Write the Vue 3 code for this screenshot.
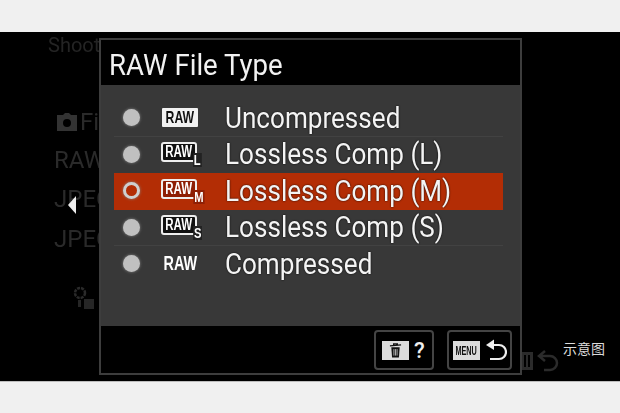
<script setup>
const fileTypes = [
  { label: 'Uncompressed', badge: 'solid', suffix: '' },
  { label: 'Lossless Comp (L)', badge: 'outline', suffix: 'L' },
  { label: 'Lossless Comp (M)', badge: 'outline', suffix: 'M', selected: true },
  { label: 'Lossless Comp (S)', badge: 'outline', suffix: 'S' },
  { label: 'Compressed', badge: 'plain', suffix: '' }
]
</script>

<template>
  <main class="page">
    <div class="top-band"></div>
    <section class="screen">
      <div class="back-menu">
        <div class="back-tab">Shoot</div>
        <div class="back-row back-row--first">
          <svg class="back-camera" viewBox="0 0 20 18">
            <path d="M6 2 L8 0 H12 L14 2 H20 V18 H0 V2 Z" fill="#333" />
            <circle cx="10" cy="10" r="4" fill="#000" />
          </svg>
          Fi
        </div>
        <div class="back-row">RAW</div>
        <div class="back-row">JPEG</div>
        <div class="back-row">JPEG</div>
        <svg class="back-gear" viewBox="0 0 22 24">
          <circle cx="7" cy="7" r="5" fill="none" stroke="#2a2a2a" stroke-width="2.5" stroke-dasharray="3 1" />
          <rect x="11" y="13" width="10" height="10" fill="#262626" />
          <rect x="5" y="14" width="3" height="7" fill="#262626" />
        </svg>
      </div>
      <div class="back-arrow"></div>
      <svg class="back-icons" viewBox="0 0 40 24">
        <rect x="0" y="4" width="13" height="18" fill="#2b2b2b" />
        <rect x="4" y="7" width="2" height="12" fill="#000" />
        <rect x="8" y="7" width="2" height="12" fill="#000" />
        <path d="M20 8 H30 A7 7 0 0 1 30 22 H24 M25 3 L19 8 L25 13" fill="none" stroke="#2b2b2b" stroke-width="2.5" />
      </svg>
      <div class="caption">示意图</div>

      <div class="dialog">
        <header class="dialog-title"><span class="narrow-title">RAW File Type</span></header>
        <ul class="option-list">
          <li
            v-for="fileType in fileTypes"
            :key="fileType.label"
            :class="['option', { 'option--selected': fileType.selected }]"
          >
            <span class="radio"></span>
            <span class="badge-cell">
              <span :class="['raw-badge', `raw-badge--${fileType.badge}`]"><span class="raw-text">RAW</span></span>
              <span v-if="fileType.suffix" class="raw-suffix">{{ fileType.suffix }}</span>
            </span>
            <span class="option-label">{{ fileType.label }}</span>
          </li>
        </ul>
        <footer class="dialog-footer">
          <div class="soft-key soft-key--delete">
            <span class="key-chip">
              <svg class="trash" viewBox="0 0 14 16">
                <path d="M1 3 L13 2 M5 2 L5 0.8 H9 V2" fill="none" stroke="#111" stroke-width="1.4" />
                <path d="M2.5 4.5 H11.5 L10.7 15.5 H3.3 Z" fill="#111" />
                <path d="M5.3 6.5 V13.5 M7 6.5 V13.5 M8.7 6.5 V13.5" stroke="#ddd" stroke-width="0.8" />
              </svg>
            </span>
            <span class="key-question">?</span>
          </div>
          <div class="soft-key soft-key--menu">
            <span class="key-chip key-chip--menu"><span class="menu-text">MENU</span></span>
            <svg class="return" viewBox="0 0 22 22">
              <path d="M8 6 H14 A6.5 6.5 0 0 1 14 20 H5" fill="none" stroke="#eee" stroke-width="2.2" />
              <path d="M1 6 L9 0.5 V11 Z" fill="#eee" />
            </svg>
          </div>
        </footer>
      </div>
    </section>
    <div class="bottom-band"></div>
  </main>
</template>

<style scoped>
.page {
  display: flex;
  flex-direction: column;
  width: 620px;
  height: 413px;
  overflow: hidden;
  background-color: #f0f0f0;
  font-family: Roboto, "Liberation Sans", "Noto Sans CJK SC", sans-serif;
}
.top-band {
  height: 32px;
}
.bottom-band {
  flex: 1;
  border-top: 1px solid #bdbdbd;
}
.screen {
  position: relative;
  height: 349px;
  background-color: #000;
}
.back-menu {
  padding: 0 0 0 48px;
  color: #2a2a2a;
  font-size: 24px;
  filter: blur(0.5px);
}
.back-tab {
  height: 24px;
  font-size: 20px;
  line-height: 26px;
  color: #242424;
}
.back-row {
  display: flex;
  align-items: center;
  gap: 3px;
  height: 39.5px;
  padding-left: 6px;
}
.back-row--first {
  margin-top: 48px;
  height: 36px;
  padding-left: 9px;
}
.back-camera {
  width: 20px;
  height: 18px;
}
.back-gear {
  display: block;
  width: 22px;
  height: 24px;
  margin: 27px 0 0 25px;
}
.back-arrow {
  position: absolute;
  left: 68px;
  top: 164px;
  border-top: 9px solid transparent;
  border-bottom: 9px solid transparent;
  border-right: 8px solid #eee;
}
.back-icons {
  position: absolute;
  left: 520px;
  top: 316px;
  width: 40px;
  height: 24px;
}
.caption {
  position: absolute;
  left: 563px;
  top: 309px;
  color: #dcdcdc;
  font-size: 14px;
  line-height: 16px;
}
.dialog {
  position: absolute;
  left: 99px;
  top: 6px;
  display: flex;
  flex-direction: column;
  box-sizing: border-box;
  width: 423px;
  height: 337px;
  background-color: #000;
  border: 2px solid #3d3d3d;
}
.dialog-title {
  height: 45px;
  padding-left: 8px;
  color: #f2f2f2;
  font-size: 30px;
  line-height: 50px;
}
.narrow-title {
  display: inline-block;
  transform: scaleX(0.92);
  transform-origin: left;
}
.option-list {
  flex: 1;
  margin: 0;
  padding: 15px 17px 0 13px;
  list-style: none;
  background-color: #383838;
}
.option {
  display: flex;
  align-items: center;
  box-sizing: border-box;
  height: 36.5px;
  color: #f2f2f2;
  border-bottom: 1px solid #424242;
}
.option--selected {
  background-color: #b32d05;
  border-bottom-color: #b32d05;
}
.option:nth-child(2),
.option:last-child {
  border-bottom-color: transparent;
}
.radio {
  box-sizing: border-box;
  width: 17px;
  height: 17px;
  margin-left: 9px;
  background-color: #c0c0c0;
  border-radius: 50%;
  box-shadow: 0 0 3px #8a8a8a;
}
.option--selected .radio {
  background-color: #b32d05;
  border: 3px solid #cfcfcf;
}
.badge-cell {
  position: relative;
  display: flex;
  justify-content: center;
  width: 38px;
  margin-left: 21px;
}
.raw-badge {
  display: flex;
  align-items: center;
  justify-content: center;
  box-sizing: border-box;
  width: 36px;
  height: 19px;
  color: #fff;
  font-family: "Liberation Sans", sans-serif;
  font-size: 17px;
  font-weight: 700;
}
.raw-text {
  display: inline-block;
  transform: scaleX(0.72);
}
.raw-badge--solid {
  color: #111;
  background-color: #f2f2f2;
  border-radius: 1px;
}
.raw-badge--outline {
  margin: -4px 0 0 -3px;
  height: 20px;
  font-size: 16px;
  border: 2px solid #eee;
  border-radius: 3px;
  background-color: #111;
}
.option--selected .raw-badge--outline {
  background-color: #8e1f05;
}
.raw-badge--plain {
  font-size: 20px;
}
.raw-suffix {
  position: absolute;
  left: 31px;
  top: 7px;
  padding: 0 1px;
  color: #fff;
  font-family: "Liberation Sans", sans-serif;
  font-size: 14px;
  font-weight: 700;
  line-height: 14px;
  background-color: #222;
  transform: scaleX(0.8);
}
.option--selected .raw-suffix {
  background-color: #8e1f05;
}
.option-label {
  display: inline-block;
  margin-left: 26px;
  color: #f4f4f4;
  font-size: 30px;
  line-height: 36px;
  white-space: nowrap;
  text-shadow: 0 0 2px #000;
  transform: scaleX(0.87);
  transform-origin: left;
}
.dialog-footer {
  display: flex;
  justify-content: flex-end;
  gap: 13px;
  box-sizing: border-box;
  height: 47px;
  padding: 4px 8px 0 0;
}
.soft-key {
  display: flex;
  align-items: center;
  box-sizing: border-box;
  height: 40px;
  border: 2px solid #444;
  border-radius: 4px;
}
.soft-key--delete {
  width: 60px;
  padding-left: 6px;
  gap: 5px;
}
.soft-key--menu {
  width: 65px;
  padding-left: 4px;
  gap: 5px;
}
.key-chip {
  display: flex;
  align-items: center;
  justify-content: center;
  width: 27px;
  height: 19px;
  background-color: #dcdcdc;
}
.key-chip--menu {
  color: #111;
  font-family: "Liberation Sans", sans-serif;
  font-size: 13px;
  font-weight: 700;
}
.menu-text {
  display: inline-block;
  transform: scaleX(0.56);
}
.trash {
  width: 13px;
  height: 15px;
}
.key-question {
  color: #eee;
  font-family: Roboto, sans-serif;
  font-size: 22px;
  font-weight: 500;
}
.return {
  width: 22px;
  height: 22px;
}
</style>
